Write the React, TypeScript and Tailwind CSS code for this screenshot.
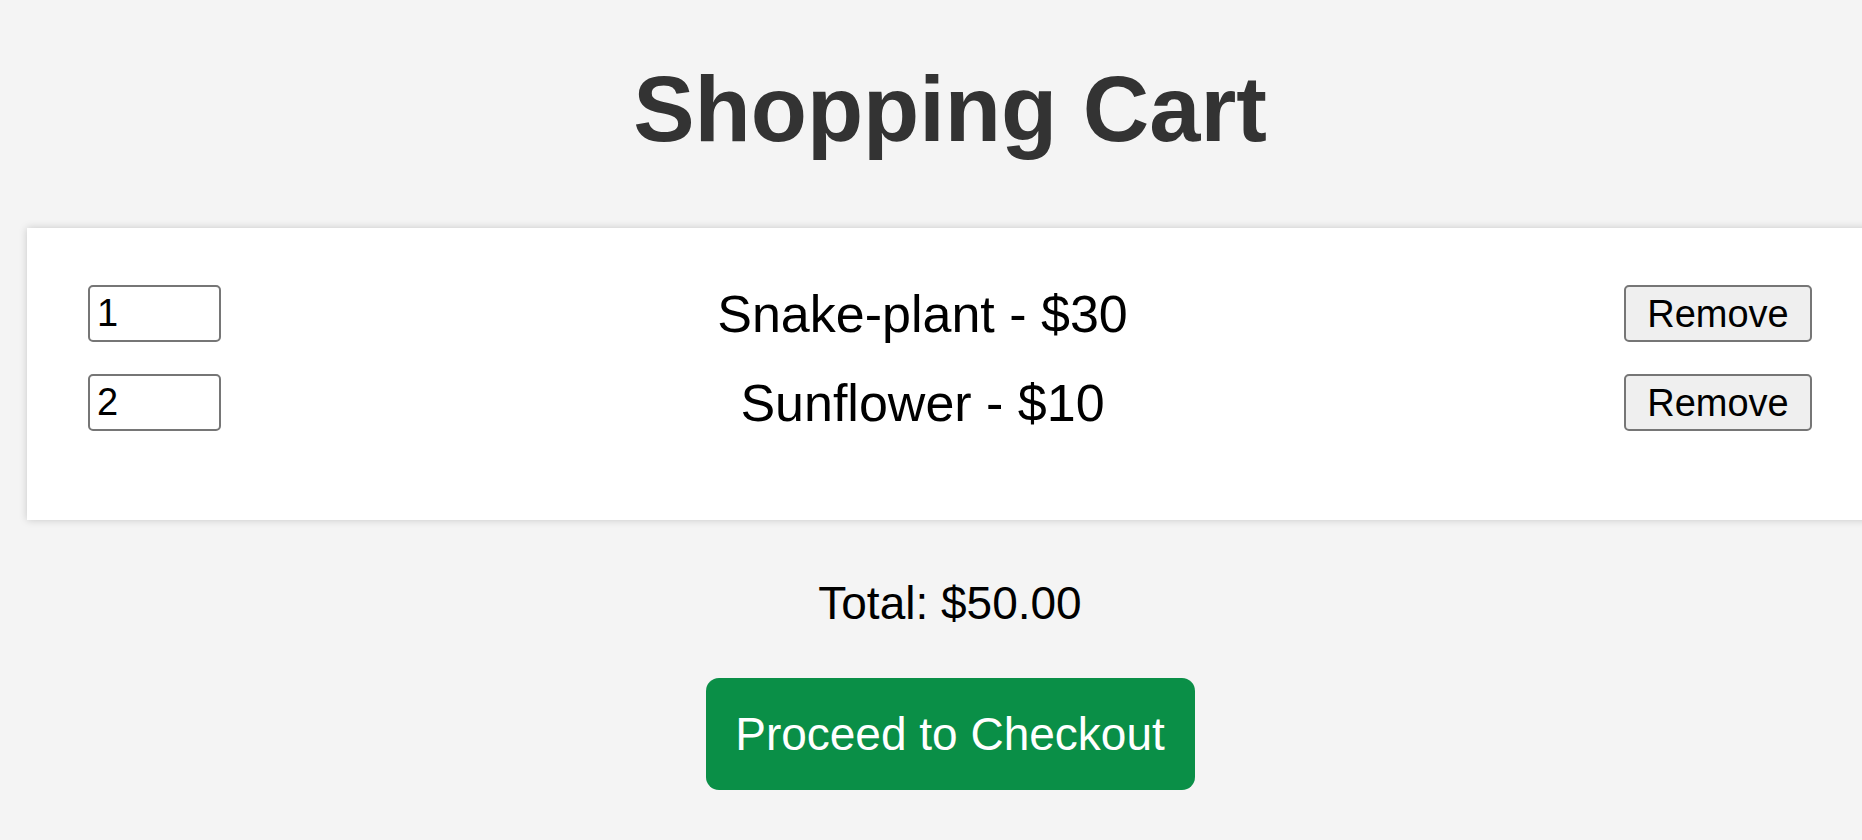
const items = [
  { qty: 1, name: "Snake-plant", price: 30 },
  { qty: 2, name: "Sunflower", price: 10 },
];

export default function App() {
  const total = items.reduce((sum, it) => sum + it.qty * it.price, 0);
  return (
    <div className="w-full min-h-[840px] overflow-hidden bg-[#f4f4f4] font-['Liberation_Sans',Arial,sans-serif]">
      <div className="w-[1900px] px-[27px] flex flex-col items-center">
        <h1 className="mt-[63px] text-[92px] leading-none font-bold text-[#333]">Shopping Cart</h1>

        <div className="mt-[73px] w-full bg-white px-[61px] pt-[57px] pb-[57px] shadow-[0_0_8px_rgba(0,0,0,0.18)]">
          {items.map((it) => (
            <div key={it.name} className="mb-[32px] flex h-[57px] items-center justify-between">
              <input
                type="number"
                defaultValue={it.qty}
                className="h-[57px] w-[133px] rounded-[5px] border-2 border-[#767676] bg-white px-[7px] text-[38px] leading-none text-black"
              />
              <span className="text-[52px] leading-none text-black">
                {it.name} - ${it.price}
              </span>
              <button className="h-[57px] w-[188px] rounded-[5px] border-2 border-[#767676] bg-[#efefef] text-[38px] leading-none text-black">
                Remove
              </button>
            </div>
          ))}
        </div>

        <p className="mt-[60px] text-[46px] leading-none text-black">Total: ${total.toFixed(2)}</p>

        <button className="mt-[52px] h-[112px] w-[489px] rounded-[13px] bg-[#0a8f47] text-[46px] leading-none text-white">
          Proceed to Checkout
        </button>
      </div>
    </div>
  );
}
